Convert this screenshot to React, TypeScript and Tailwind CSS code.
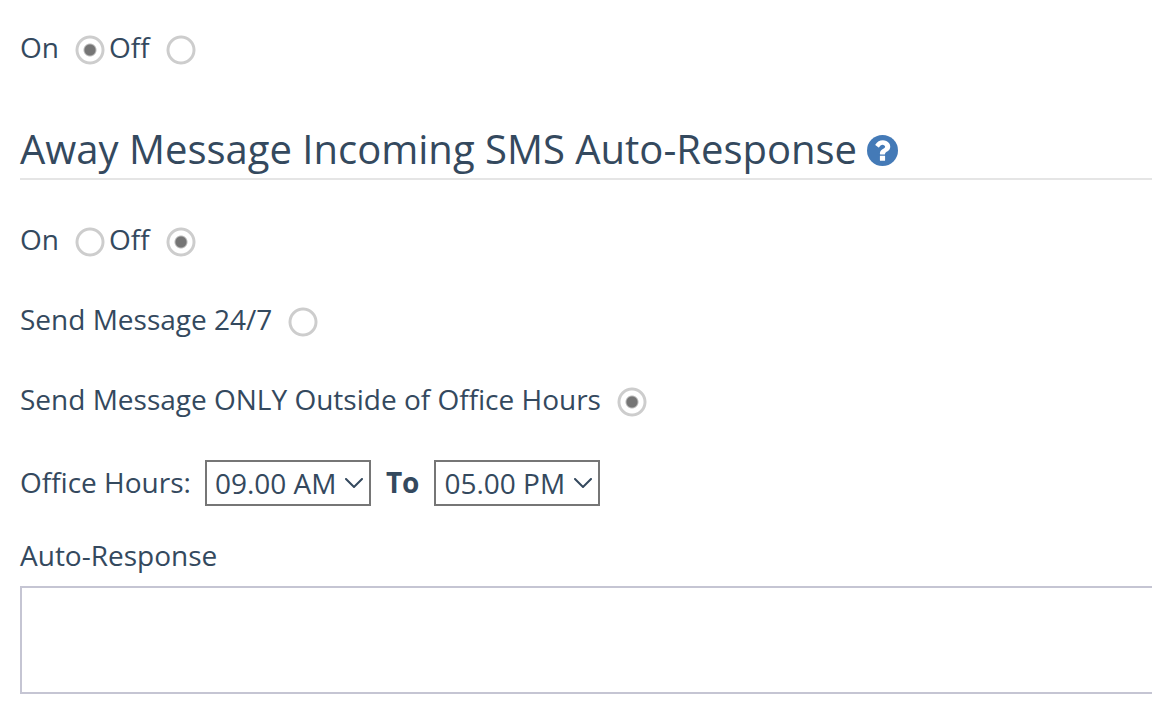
import type { ReactNode } from "react";

type RadioProps = { name: string; label: string; checked?: boolean };

function Radio({ name, label, checked }: RadioProps) {
  return (
    <label className="flex items-center">
      <span className="mr-4">{label}</span>
      <input
        type="radio"
        name={name}
        defaultChecked={checked}
        className="mt-1.5 size-[30px] appearance-none rounded-full bg-[radial-gradient(circle,transparent_11px,#cdcdcd_12px,#cdcdcd_14px,transparent_15px)] checked:bg-[radial-gradient(circle,#757575_5px,transparent_7px,transparent_11px,#cdcdcd_12px,#cdcdcd_14px,transparent_15px)]"
      />
    </label>
  );
}

function Row({ children }: { children: ReactNode }) {
  return <div className="flex h-10 items-center gap-1">{children}</div>;
}

function HelpIcon() {
  return (
    <svg viewBox="0 128 1536 1536" className="size-[31px]" aria-hidden="true">
      <circle cx="768" cy="896" r="768" fill="#447ab7" />
      <path
        fill="#ffffff"
        d="M896 1376v-192q0-14-9-23t-23-9H672q-14 0-23 9t-9 23v192q0 14 9 23t23 9h192q14 0 23-9t9-23zM1152 704q0-88-55.5-163T958 425t-170-41q-243 0-371 213-15 24 8 42l132 100q7 6 19 6 16 0 25-12 53-68 86-92 34-24 86-24 48 0 85.500 26t37.500 59q0 38-20 61t-68 45q-63 28-115.500 86.500T640 1020v36q0 14 9 23t23 9h192q14 0 23-9t9-23q0-19 21.500-49.500T972 957q32-18 49-28.500t46-35 44.500-48 28-60.500 12.500-81z"
      />
    </svg>
  );
}

function TimeSelect({ id, value }: { id: string; value: string }) {
  return (
    <span className="relative flex">
      <select
        id={id}
        defaultValue={value}
        className="h-[46px] w-[166px] appearance-none border-2 border-[#767676] bg-white pl-2 text-[28px]"
      >
        <option>09.00 AM</option>
        <option>05.00 PM</option>
      </select>
      <svg
        viewBox="0 0 18 10"
        className="pointer-events-none absolute top-[18px] right-2 h-[10px] w-[18px]"
        fill="none"
        stroke="currentColor"
        strokeWidth="2"
        strokeLinecap="round"
        aria-hidden="true"
      >
        <path d="M1 1l8 8 8-8" />
      </svg>
    </span>
  );
}

export default function App() {
  return (
    <main className="overflow-hidden pt-[27px] pb-8 pl-5 font-['Open_Sans',sans-serif] text-[28px] leading-10 text-[#34495e]">
      <Row>
        <Radio name="response" label="On" checked />
        <Radio name="response" label="Off" />
      </Row>
      <h2 className="mt-14 flex h-[57px] items-center gap-[10px] border-b-2 border-[#e5e5e5] pb-1 text-[40px]">
        Away Message Incoming SMS Auto-Response
        <button type="button" aria-label="Help" className="mt-1">
          <HelpIcon />
        </button>
      </h2>
      <div className="mt-[39px] flex flex-col gap-10">
        <Row>
          <Radio name="away" label="On" />
          <Radio name="away" label="Off" checked />
        </Row>
        <Row>
          <Radio name="schedule" label="Send Message 24/7" />
        </Row>
        <Row>
          <Radio name="schedule" label="Send Message ONLY Outside of Office Hours" checked />
        </Row>
      </div>
      <div className="mt-[41px] flex items-center">
        <label htmlFor="start" className="mr-[14px] mb-0.5">Office Hours:</label>
        <TimeSelect id="start" value="09.00 AM" />
        <label htmlFor="end" className="mx-[15px] mb-0.5 font-bold">To</label>
        <TimeSelect id="end" value="05.00 PM" />
      </div>
      <label htmlFor="message" className="mt-[29px] block">Auto-Response</label>
      <textarea
        id="message"
        className="mt-[11px] block h-[108px] w-full resize-none border-2 border-r-0 border-[#c5c5d3] p-2"
      />
    </main>
  );
}
